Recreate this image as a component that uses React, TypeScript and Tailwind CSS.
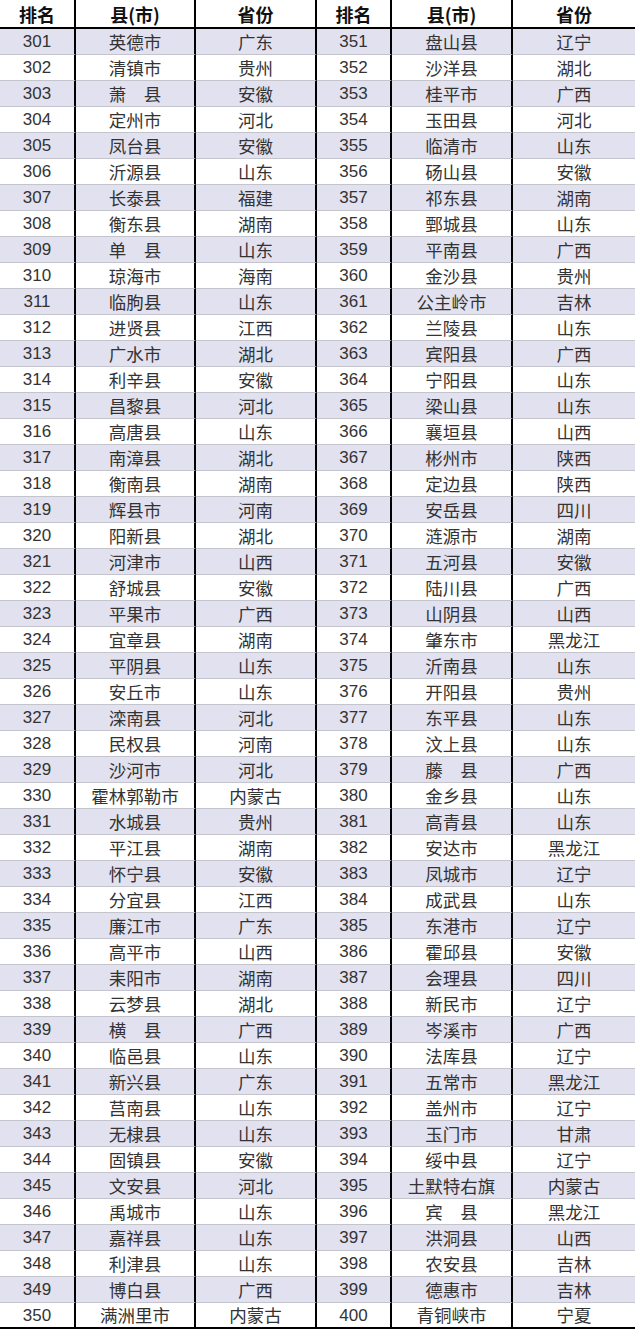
const left: [string, string, string][] = [
  ['301', '英德市', '广东'],
  ['302', '清镇市', '贵州'],
  ['303', '萧　县', '安徽'],
  ['304', '定州市', '河北'],
  ['305', '凤台县', '安徽'],
  ['306', '沂源县', '山东'],
  ['307', '长泰县', '福建'],
  ['308', '衡东县', '湖南'],
  ['309', '单　县', '山东'],
  ['310', '琼海市', '海南'],
  ['311', '临朐县', '山东'],
  ['312', '进贤县', '江西'],
  ['313', '广水市', '湖北'],
  ['314', '利辛县', '安徽'],
  ['315', '昌黎县', '河北'],
  ['316', '高唐县', '山东'],
  ['317', '南漳县', '湖北'],
  ['318', '衡南县', '湖南'],
  ['319', '辉县市', '河南'],
  ['320', '阳新县', '湖北'],
  ['321', '河津市', '山西'],
  ['322', '舒城县', '安徽'],
  ['323', '平果市', '广西'],
  ['324', '宜章县', '湖南'],
  ['325', '平阴县', '山东'],
  ['326', '安丘市', '山东'],
  ['327', '滦南县', '河北'],
  ['328', '民权县', '河南'],
  ['329', '沙河市', '河北'],
  ['330', '霍林郭勒市', '内蒙古'],
  ['331', '水城县', '贵州'],
  ['332', '平江县', '湖南'],
  ['333', '怀宁县', '安徽'],
  ['334', '分宜县', '江西'],
  ['335', '廉江市', '广东'],
  ['336', '高平市', '山西'],
  ['337', '耒阳市', '湖南'],
  ['338', '云梦县', '湖北'],
  ['339', '横　县', '广西'],
  ['340', '临邑县', '山东'],
  ['341', '新兴县', '广东'],
  ['342', '莒南县', '山东'],
  ['343', '无棣县', '山东'],
  ['344', '固镇县', '安徽'],
  ['345', '文安县', '河北'],
  ['346', '禹城市', '山东'],
  ['347', '嘉祥县', '山东'],
  ['348', '利津县', '山东'],
  ['349', '博白县', '广西'],
  ['350', '满洲里市', '内蒙古'],
];

const right: [string, string, string][] = [
  ['351', '盘山县', '辽宁'],
  ['352', '沙洋县', '湖北'],
  ['353', '桂平市', '广西'],
  ['354', '玉田县', '河北'],
  ['355', '临清市', '山东'],
  ['356', '砀山县', '安徽'],
  ['357', '祁东县', '湖南'],
  ['358', '鄄城县', '山东'],
  ['359', '平南县', '广西'],
  ['360', '金沙县', '贵州'],
  ['361', '公主岭市', '吉林'],
  ['362', '兰陵县', '山东'],
  ['363', '宾阳县', '广西'],
  ['364', '宁阳县', '山东'],
  ['365', '梁山县', '山东'],
  ['366', '襄垣县', '山西'],
  ['367', '彬州市', '陕西'],
  ['368', '定边县', '陕西'],
  ['369', '安岳县', '四川'],
  ['370', '涟源市', '湖南'],
  ['371', '五河县', '安徽'],
  ['372', '陆川县', '广西'],
  ['373', '山阴县', '山西'],
  ['374', '肇东市', '黑龙江'],
  ['375', '沂南县', '山东'],
  ['376', '开阳县', '贵州'],
  ['377', '东平县', '山东'],
  ['378', '汶上县', '山东'],
  ['379', '藤　县', '广西'],
  ['380', '金乡县', '山东'],
  ['381', '高青县', '山东'],
  ['382', '安达市', '黑龙江'],
  ['383', '凤城市', '辽宁'],
  ['384', '成武县', '山东'],
  ['385', '东港市', '辽宁'],
  ['386', '霍邱县', '安徽'],
  ['387', '会理县', '四川'],
  ['388', '新民市', '辽宁'],
  ['389', '岑溪市', '广西'],
  ['390', '法库县', '辽宁'],
  ['391', '五常市', '黑龙江'],
  ['392', '盖州市', '辽宁'],
  ['393', '玉门市', '甘肃'],
  ['394', '绥中县', '辽宁'],
  ['395', '土默特右旗', '内蒙古'],
  ['396', '宾　县', '黑龙江'],
  ['397', '洪洞县', '山西'],
  ['398', '农安县', '吉林'],
  ['399', '德惠市', '吉林'],
  ['400', '青铜峡市', '宁夏'],
];

const headers = ['排名', '县(市)', '省份', '排名', '县(市)', '省份'];

const cjk = "font-['Noto_Sans_CJK_SC',sans-serif]";
const num = "font-['Liberation_Sans','Noto_Sans_CJK_SC',sans-serif]";

export default function App() {
  return (
    <div className="w-[635px] h-[1330px] bg-white overflow-hidden">
      <div className="grid grid-cols-[76px_120px_121px_75px_121px_122px]">
        {headers.map((h, i) => (
          <div
            key={'h' + i}
            className={`h-[29px] flex items-center justify-center border-b-2 border-black text-[18px] font-bold text-[#111] leading-none ${cjk} ${
              i < 5 ? 'border-r-2 border-r-black' : ''
            }`}
          >
            {h}
          </div>
        ))}

        {left.map((row, r) => {
          const cells = [...row, ...right[r]];
          const odd = r % 2 === 0;
          const last = r === left.length - 1;
          return cells.map((c, i) => (
            <div
              key={r + '-' + i}
              className={`h-[26px] flex items-center justify-center leading-none text-[#333] whitespace-pre ${
                i % 3 === 0 ? `text-[17px] ${num}` : `text-[17.5px] ${cjk}`
              } ${odd ? 'bg-[#e2e1ef]' : 'bg-white'} ${
                last ? 'border-b-2 border-black' : 'border-b border-[#c4c4cc]'
              } ${i < 5 ? 'border-r-2 border-r-black' : ''}`}
            >
              {c}
            </div>
          ));
        })}
      </div>
    </div>
  );
}
